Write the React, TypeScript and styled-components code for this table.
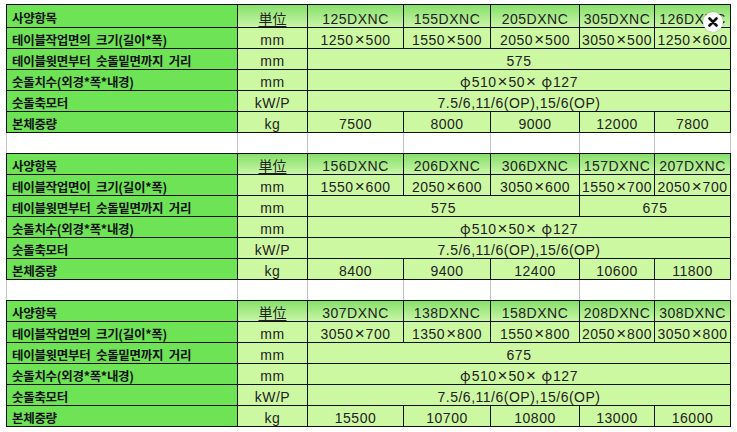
import React from "react";
import styled, { createGlobalStyle } from "styled-components";

const GlobalStyle = createGlobalStyle`
  html, body {
    margin: 0;
    padding: 0;
    background: #fff;
  }
`;

const COLUMNS = "231px 70px 96px 87px 89px 75px 76px";

const Sheet = styled.div`
  position: relative;
  display: flex;
  flex-direction: column;
  width: 725px;
  padding: 4px 0 0 6px;
`;

const SpecTable = styled.div<{ $headHeight: number }>`
  display: grid;
  grid-template-columns: ${COLUMNS};
  grid-template-rows: ${(p) => p.$headHeight}px;
  grid-auto-rows: 21px;
  border-top: 1px solid #111;
  border-left: 1px solid #111;
`;

const GapRow = styled.div`
  display: grid;
  grid-template-columns: ${COLUMNS};
  height: 20px;
  border-left: 1px solid #c4c4c4;

  span {
    border-right: 1px solid #c4c4c4;
  }
`;

const LabelCell = styled.div`
  display: flex;
  align-items: center;
  padding: 2px 0 0 5px;
  box-sizing: border-box;
  background: #6ee356;
  border-right: 1px solid #111;
  border-bottom: 1px solid #111;
  font-family: "Noto Sans CJK KR", sans-serif;
  font-weight: 700;
  font-size: 12.5px;
  letter-spacing: -0.3px;
  word-spacing: 3px;
  color: #111;
  white-space: nowrap;
  overflow: hidden;
`;

const ValueCell = styled.div<{ $span?: number; $head?: boolean }>`
  grid-column: span ${(p) => p.$span ?? 1};
  display: flex;
  align-items: flex-end;
  justify-content: center;
  box-sizing: border-box;
  background: ${(p) =>
    p.$head ? "linear-gradient(#86e06b, #c9f5a6)" : "#cdf8a2"};
  border-right: 1px solid #111;
  border-bottom: 1px solid #111;
  font-family: "Liberation Sans", "Noto Sans CJK JP", sans-serif;
  font-size: 14px;
  letter-spacing: 0.5px;
  color: #222;
  white-space: nowrap;
  overflow: hidden;
`;

const ValueText = styled.span`
  display: block;
  line-height: 15px;
`;

const UnitHead = styled.span`
  font-family: "Noto Sans CJK JP", sans-serif;
  font-size: 14px;
  letter-spacing: 0;
  text-decoration: underline;
  text-underline-offset: 2px;
`;

// the sheet draws × and φ as wide full-width signs
const Times = styled.span`
  font-family: "Liberation Sans", sans-serif;
  font-size: 17px;
  line-height: 0;
  margin: 0 1px;
  letter-spacing: 0;
`;

const Phi = styled.span`
  font-family: "Noto Sans CJK JP", sans-serif;
  font-size: 14px;
  line-height: 0;
  margin-right: 1px;
  letter-spacing: 0;
`;

const CloseButton = styled.button`
  position: absolute;
  top: 12px;
  left: 703px;
  width: 20px;
  height: 20px;
  padding: 0;
  border: none;
  border-radius: 50%;
  background: #fff;
  box-shadow: 0 0 2px rgba(0, 0, 0, 0.25);
  display: flex;
  align-items: center;
  justify-content: center;
  cursor: pointer;
`;

interface Cell {
  text: string;
  span?: number;
}

interface Spec {
  models: string[];
  sizes: string[];
  distance: Cell[];
  weights: string[];
  sizeLabel: string;
}

const specs: Spec[] = [
  {
    sizeLabel: "테이블작업면의 크기(길이*폭)",
    models: ["125DXNC", "155DXNC", "205DXNC", "305DXNC", "126DXNC"],
    sizes: ["1250×500", "1550×500", "2050×500", "3050×500", "1250×600"],
    distance: [{ text: "575", span: 5 }],
    weights: ["7500", "8000", "9000", "12000", "7800"],
  },
  {
    sizeLabel: "테이블작업면이 크기(길이*폭)",
    models: ["156DXNC", "206DXNC", "306DXNC", "157DXNC", "207DXNC"],
    sizes: ["1550×600", "2050×600", "3050×600", "1550×700", "2050×700"],
    distance: [
      { text: "575", span: 3 },
      { text: "675", span: 2 },
    ],
    weights: ["8400", "9400", "12400", "10600", "11800"],
  },
  {
    sizeLabel: "테이블작업면의 크기(길이*폭)",
    models: ["307DXNC", "138DXNC", "158DXNC", "208DXNC", "308DXNC"],
    sizes: ["3050×700", "1350×800", "1550×800", "2050×800", "3050×800"],
    distance: [{ text: "675", span: 5 }],
    weights: ["15500", "10700", "10800", "13000", "16000"],
  },
];

const renderText = (text: string) =>
  text.split(/([×φ])/).map((part, i) => {
    if (part === "×") return <Times key={i}>×</Times>;
    if (part === "φ") return <Phi key={i}>φ</Phi>;
    return <React.Fragment key={i}>{part}</React.Fragment>;
  });

const Row: React.FC<{ label: string; unit: React.ReactNode; cells: Cell[]; head?: boolean }> = ({
  label,
  unit,
  cells,
  head,
}) => (
  <>
    <LabelCell>{label}</LabelCell>
    <ValueCell $head={head}>
      <ValueText>{unit}</ValueText>
    </ValueCell>
    {cells.map((c, i) => (
      <ValueCell key={i} $span={c.span} $head={head}>
        <ValueText>{renderText(c.text)}</ValueText>
      </ValueCell>
    ))}
  </>
);

const asCells = (list: string[]): Cell[] => list.map((text) => ({ text }));

const Gap = () => (
  <GapRow>
    {Array.from({ length: 7 }).map((_, i) => (
      <span key={i} />
    ))}
  </GapRow>
);

const App: React.FC = () => {
  return (
    <>
      <GlobalStyle />
      <Sheet>
        {specs.map((spec, i) => (
          <React.Fragment key={spec.models[0]}>
            {i > 0 && <Gap />}
            <SpecTable $headHeight={i === 0 ? 23 : 21}>
              <Row label="사양항목" unit={<UnitHead>単位</UnitHead>} cells={asCells(spec.models)} head />
              <Row label={spec.sizeLabel} unit="mm" cells={asCells(spec.sizes)} />
              <Row label="테이블윗면부터 숫돌밑면까지 거리" unit="mm" cells={spec.distance} />
              <Row label="숫돌치수(외경*폭*내경)" unit="mm" cells={[{ text: "φ510×50× φ127", span: 5 }]} />
              <Row label="숫돌축모터" unit="kW/P" cells={[{ text: "7.5/6,11/6(OP),15/6(OP)", span: 5 }]} />
              <Row label="본체중량" unit="kg" cells={asCells(spec.weights)} />
            </SpecTable>
          </React.Fragment>
        ))}
        <CloseButton aria-label="close">
          <svg width="10" height="10" viewBox="0 0 10 10">
            <path d="M1.5 1.5 L8.5 8.5 M8.5 1.5 L1.5 8.5" stroke="#111" strokeWidth="2.6" strokeLinecap="round" />
          </svg>
        </CloseButton>
      </Sheet>
    </>
  );
};

export default App;
